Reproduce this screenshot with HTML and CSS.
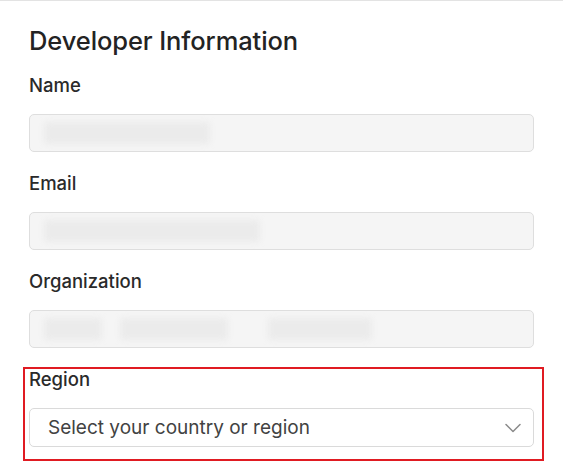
FILE: index.html
```html
<!DOCTYPE html>
<html lang="en">
<head>
<meta charset="utf-8">
<title>Developer Information</title>
<link rel="stylesheet" href="styles.css">
</head>
<body>
<main class="panel">
  <h1 class="title">Developer Information</h1>
  <div class="fields">
    <div class="field">
      <label class="label">Name</label>
      <div class="input">
        <span class="blur" style="width:166px"></span>
      </div>
    </div>
    <div class="field">
      <label class="label">Email</label>
      <div class="input">
        <span class="blur" style="width:216px"></span>
      </div>
    </div>
    <div class="field">
      <label class="label">Organization</label>
      <div class="input">
        <span class="blur" style="width:58px"></span>
        <span class="blur" style="width:108px"></span>
        <span class="blur gap" style="width:104px"></span>
      </div>
    </div>
    <div class="field highlighted">
      <label class="label">Region</label>
      <div class="select">
        <span class="select-text">Select your country or region</span>
        <svg class="chevron" width="16" height="10" viewBox="0 0 16 10" aria-hidden="true">
          <path d="M1 1.5 L8 8.5 L15 1.5" fill="none" stroke="#8a8a8a" stroke-width="1.5" stroke-linecap="round" stroke-linejoin="round"/>
        </svg>
      </div>
    </div>
  </div>
</main>
</body>
</html>
```

FILE: styles.css
```css
html, body {
  margin: 0;
  padding: 0;
  background: #ffffff;
}

body {
  box-sizing: border-box;
  min-height: 100vh;
  border-top: 1px solid #e3e3e3;
  font-family: Inter, "Noto Sans", "Liberation Sans", sans-serif;
  color: #262626;
}

.panel {
  padding: 25px 29px 24px 29px;
  width: 505px;
}

.title {
  margin: 0;
  font-size: 25.5px;
  line-height: 30px;
  font-weight: 500;
  color: #232323;
  letter-spacing: -0.1px;
}

.fields {
  display: flex;
  flex-direction: column;
  gap: 20px;
  margin-top: 18px;
}

.field {
  display: flex;
  flex-direction: column;
  gap: 18px;
}

.label {
  font-size: 18.5px;
  line-height: 22px;
  font-weight: 500;
  color: #2a2a2a;
}

.input {
  box-sizing: border-box;
  height: 38px;
  background: #f5f5f5;
  border: 1px solid #dedede;
  border-radius: 5px;
  display: flex;
  align-items: center;
  gap: 18px;
  padding-left: 14px;
  overflow: hidden;
}

.blur {
  display: block;
  height: 22px;
  background: #ebebeb;
  filter: blur(3px);
  border-radius: 4px;
}

.blur.gap {
  margin-left: 22px;
}

.select {
  box-sizing: border-box;
  height: 39px;
  background: #ffffff;
  border: 1px solid #dadada;
  border-radius: 5px;
  display: flex;
  align-items: center;
  justify-content: space-between;
  padding: 0 12px 0 18px;
}

.select-text {
  font-size: 19px;
  color: #424242;
  font-weight: 400;
}

.chevron {
  display: block;
  margin-top: 1px;
}

.highlighted {
  position: relative;
}

.highlighted::after {
  content: "";
  position: absolute;
  left: -6px;
  right: -10px;
  top: -1px;
  bottom: -14px;
  border: 2px solid #e01b22;
  pointer-events: none;
}
```
